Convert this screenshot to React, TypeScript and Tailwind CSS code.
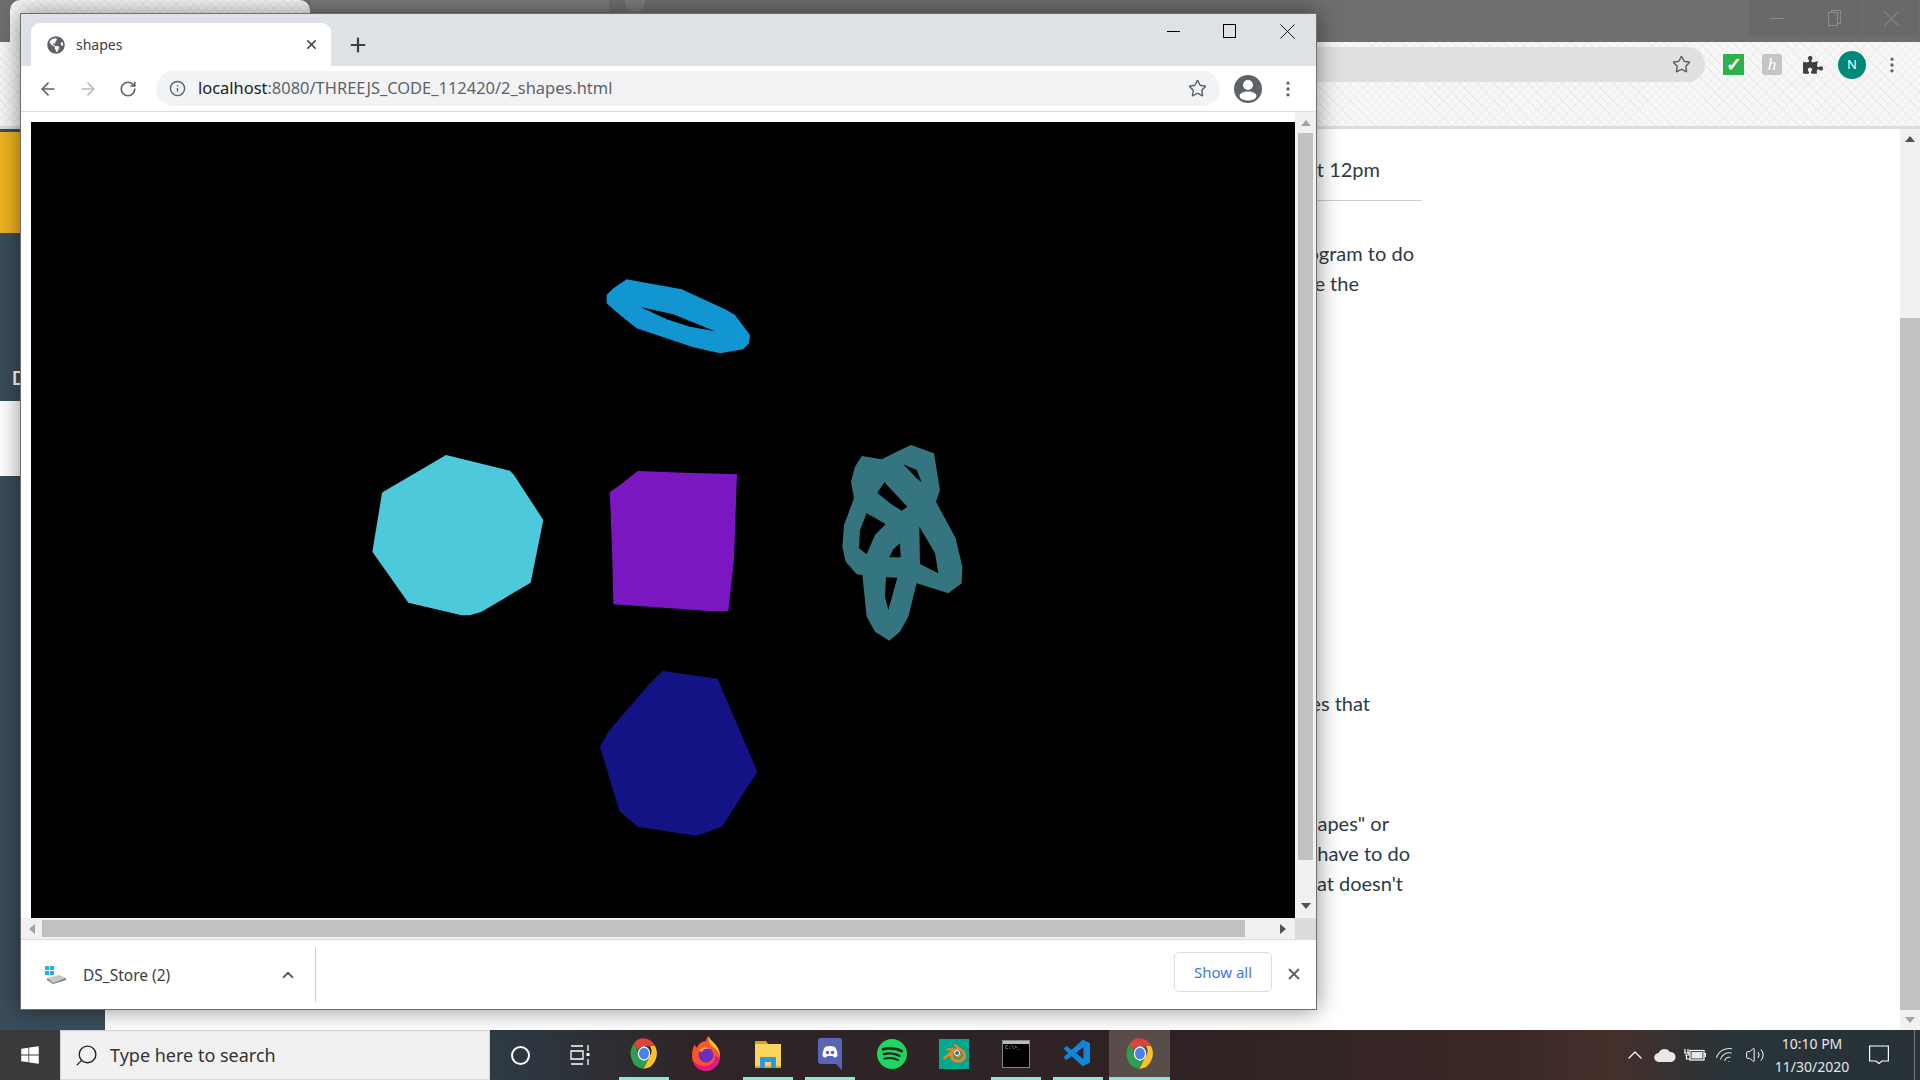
import { ArrowLeft, ArrowRight, ChevronUp, EllipsisVertical, Info, Plus, RotateCw, Search, Star, Volume2, Wifi, X } from "lucide-react";
import { FaGlobeAmericas, FaPuzzlePiece, FaWindows } from "react-icons/fa";
import { SiBlender, SiDiscord, SiSpotify } from "react-icons/si";
import { VscVscode } from "react-icons/vsc";

const pattern =
  "bg-[#f7f7f7] [background-image:repeating-linear-gradient(45deg,#ececec_0_1px,transparent_1px_6px),repeating-linear-gradient(-45deg,#efefef_0_1px,transparent_1px_6px)]";

function ChromeIcon({ size = 28 }: { size?: number }) {
  return (
    <svg width={size} height={size + 5} viewBox="0 0 48 48" preserveAspectRatio="none">
      <path d="M24 2a22 22 0 0 1 19 11H24a11 11 0 0 0-10.5 7.5L6.5 9.5A22 22 0 0 1 24 2z" fill="#db4437" />
      <path d="M43 13a22 22 0 0 1-20 33l10-17a11 11 0 0 0 1-16z" fill="#fbc02d" />
      <path d="M6.500 9.500l9 15.500a10 10 0 0 0 17 4l-9.500 17A22 22 0 0 1 6.500 9.500z" fill="#2e9e4f" />
      <circle cx="24" cy="24" r="10.500" fill="#fff" />
      <circle cx="24" cy="24" r="8.500" fill="#4f80ec" />
    </svg>
  );
}

function FirefoxIcon() {
  return (
    <svg width="30" height="36" viewBox="0 0 30 36">
      <path d="M15 35C7 35 1 28 1 20 1 15 2 11 4 8c0 2 1 3 2 4 1-4 5-7 9-7 0-2 1-4 3-5 0 3 2 4 5 7 4 4 6 8 6 13 0 8-6 15-14 15z" fill="#f9532f" />
      <path d="M15 35c-6 0-12-4-13-11 3 5 8 7 13 6 6-1 10-5 9-11 3 3 5 3 5 1 0 8-6 15-14 15z" fill="#e31587" />
      <path d="M18 0c0 3 2 4 5 7 4 4 6 8 6 13-2-6-6-9-9-10-2-3-3-7-2-10z" fill="#ffbd2e" />
      <circle cx="15" cy="19" r="7.500" fill="#6b2fc0" />
      <path d="M8 15c2-4 8-5 11-2-4-1-7 0-8 3z" fill="#ffa436" />
    </svg>
  );
}

function FolderIcon() {
  return (
    <svg width="28" height="30" viewBox="0 0 28 30">
      <path d="M1 2h11l3 4H1z" fill="#d99f16" />
      <rect x="1" y="5" width="26" height="24" fill="#f9d560" />
      <rect x="1" y="27" width="26" height="2" fill="#d9a62a" />
      <path d="M6 18h16v11h-5v-6h-6v6H6z" fill="#2b9ae8" />
    </svg>
  );
}

function DiscordIcon() {
  return (
    <svg width="24" height="32" viewBox="0 0 24 32">
      <path d="M3 0h18a3 3 0 0 1 3 3v29l-6-6H3a3 3 0 0 1-3-3V3a3 3 0 0 1 3-3z" fill="#5865b8" />
      <path d="M7 9c3-1.500 7-1.500 10 0 2 3 2.500 6 2.500 9-1 1-2.500 1.500-3.500 1.500l-1-1.500H9l-1 1.500c-1 0-2.500-.5-3.500-1.500 0-3 .5-6 2.500-9z" fill="#fff" />
      <circle cx="9.500" cy="14.500" r="1.800" fill="#5865b8" />
      <circle cx="14.500" cy="14.500" r="1.800" fill="#5865b8" />
    </svg>
  );
}

function BlenderIcon() {
  return (
    <div className="relative flex h-[30px] w-[30px] items-center justify-center bg-[#00a88f]">
      <SiBlender size={23} color="#f0851f" />
      <div className="absolute left-[15px] top-[11px] h-[6px] w-[6px] rounded-full border border-white bg-[#2a6ea6]" />
    </div>
  );
}

function TerminalIcon() {
  return (
    <div className="h-[28px] w-[28px] border border-[#888] bg-black">
      <div className="h-[3px] bg-[#bbb]" />
      <div className="pl-[2px] pt-[1px] font-['Liberation_Mono'] text-[5px] leading-[6px] text-[#ccc]">C:\&gt;_</div>
    </div>
  );
}

const taskItems = [
  { icon: <ChromeIcon />, on: true },
  { icon: <FirefoxIcon />, on: false },
  { icon: <FolderIcon />, on: true },
  { icon: <DiscordIcon />, on: true },
  { icon: <SiSpotify size={30} color="#1ed760" />, on: false },
  { icon: <BlenderIcon />, on: false },
  { icon: <TerminalIcon />, on: true },
  { icon: <VscVscode size={32} color="#0f87d6" />, on: true },
];

function Taskbar() {
  return (
    <div className="flex h-[50px] shrink-0 bg-[linear-gradient(90deg,#3c3a3a_0%,#2c3a44_26%,#2f2527_36%,#2e2224_60%,#3a2826_78%,#452f2b_84%,#283438_90%,#273239_100%)] text-white">
      <div className="flex w-[60px] items-center justify-center">
        <FaWindows size={20} color="#fff" />
      </div>
      <div className="flex w-[430px] items-center gap-[11px] border border-[#d5d5d5] bg-[#f1f1f1] pl-[13px]">
        <Search size={25} strokeWidth={1.300} color="#222" className="-scale-x-100" />
        <span className="font-['Noto_Sans'] text-[18px] text-[#333]">Type here to search</span>
      </div>
      <div className="flex w-[60px] items-center justify-center">
        <div className="h-[19px] w-[19px] rounded-full border-[2.500px] border-white" />
      </div>
      <div className="flex w-[60px] items-center justify-center">
        <svg width="22" height="22" viewBox="0 0 22 22" fill="none" stroke="#fff" strokeWidth="1.300">
          <path d="M2 2h12M2 7h12v8H2zM2 20h12M19 1v6M19 15v6" />
          <rect x="17.500" y="9" width="3" height="3" fill="#fff" stroke="none" />
        </svg>
      </div>
      <div className="flex pl-[3px]">
        {taskItems.map((t, i) => (
          <div key={i} className="flex h-[50px] w-[62px] flex-col">
            <div className="flex flex-1 items-center justify-center">{t.icon}</div>
            <div className={`mx-[6px] h-[3px] ${t.on ? "bg-[#8be8d8]" : ""}`} />
          </div>
        ))}
        <div className="flex h-[50px] w-[61px] flex-col bg-[#594d4b]">
          <div className="flex flex-1 items-center justify-center">
            <ChromeIcon />
          </div>
          <div className="h-[3px] bg-[#8be8d8]" />
        </div>
      </div>
      <div className="ml-auto flex w-[300px]">
        <div className="flex w-[30px] items-center justify-center">
          <ChevronUp size={24} strokeWidth={1.200} color="#fff" />
        </div>
        <div className="flex w-[30px] items-center justify-center">
          <svg width="22" height="14" viewBox="0 0 22 14">
            <path d="M5 14a4.500 4.500 0 0 1-.5-9A6.500 6.500 0 0 1 16 4a5 5 0 0 1 1 10z" fill="#e8e8e8" />
          </svg>
        </div>
        <div className="flex w-[30px] items-center justify-center">
          <svg width="22" height="14" viewBox="0 0 22 14" fill="none" stroke="#fff" strokeWidth="1.200">
            <path d="M1 1v4M4 1v4M0 5h5v2H1M2.500 7v4h4" />
            <rect x="6" y="2.500" width="14" height="9.500" />
            <rect x="7.500" y="4" width="11" height="6.500" fill="#e8e8e8" stroke="none" />
            <rect x="20.500" y="5" width="1.500" height="4" fill="#fff" stroke="none" />
          </svg>
        </div>
        <div className="flex w-[30px] items-center justify-center">
          <Wifi size={21} strokeWidth={1.200} color="#ddd" className="-rotate-[30deg]" />
        </div>
        <div className="flex w-[30px] items-center justify-center">
          <Volume2 size={20} strokeWidth={1.200} color="#fff" />
        </div>
        <div className="flex w-[84px] flex-col items-center justify-center font-['Noto_Sans'] text-[14px] leading-[23px] text-[#e6e6e6]">
          <span>10:10 PM</span>
          <span>11/30/2020</span>
        </div>
        <div className="flex w-[50px] items-center justify-center">
          <svg width="20" height="20" viewBox="0 0 20 20" fill="none" stroke="#fff" strokeWidth="1.200">
            <path d="M.6 1h18.800v15H13l-3 2.500L7 16H.6z" />
          </svg>
        </div>
        <div className="my-0 ml-[10px] w-px bg-[#777]" />
      </div>
    </div>
  );
}

function PageLine({ w, text, cls = "" }: { w: string; text: string; cls?: string }) {
  return <div className={`${w} whitespace-nowrap text-right ${cls}`}>{text}</div>;
}

function BackgroundBrowser() {
  return (
    <div className="flex min-h-0 flex-1 flex-col">
      <div className="flex h-[42px] shrink-0 bg-[#6e6e6e]">
        <div className={`ml-[10px] w-[300px] rounded-t-[10px] ${pattern}`} />
        <div className="h-[12px] w-[299px] bg-[#7b7b7b]" />
        <div className="ml-[16px] h-[12px] w-[20px] rounded-b-full bg-[#7b7b7b]" />
        <div className="ml-auto mr-px flex h-[36px]">
          <div className="flex w-[56px] items-center justify-center bg-[#696969]">
            <div className="h-px w-[14px] bg-[#8c8c8c]" />
          </div>
          <div className="ml-px flex w-[56px] items-center justify-center bg-[#696969]">
            <div className="relative h-[16px] w-[13px]">
              <div className="absolute right-0 top-0 h-[14px] w-[10px] border border-[#8c8c8c]" />
              <div className="absolute bottom-0 left-0 h-[14px] w-[10px] border border-[#8c8c8c] bg-[#696969]" />
            </div>
          </div>
          <div className="ml-px flex w-[56px] items-center justify-center bg-[#696969]">
            <X size={27} strokeWidth={0.900} color="#8c8c8c" />
          </div>
        </div>
      </div>
      <div className={`flex h-[87px] shrink-0 items-start border-b-[3px] border-[#dcdce0] pt-[5px] ${pattern}`}>
        <div className="ml-[1000px] flex h-[35px] w-[705px] items-center justify-end rounded-r-full bg-[#e0e0e0] pr-[14px]">
          <Star size={19} strokeWidth={1.800} color="#5f6368" />
        </div>
        <div className="flex h-[35px] items-center">
          <div className="ml-[18px] flex h-[21px] w-[21px] items-center justify-center border border-[#2eb04a] bg-[#2eb04a] text-[19px] font-bold leading-none text-white">✓</div>
          <div className="ml-[18px] flex h-[21px] w-[20px] items-center justify-center rounded-[3px] bg-[#c4c4c4] font-['Liberation_Serif'] text-[17px] italic leading-none text-white">h</div>
          <div className="ml-[21px]">
            <FaPuzzlePiece size={20} color="#3c4043" />
          </div>
          <div className="ml-[15px] flex h-[28px] w-[28px] items-center justify-center rounded-full bg-[#00897b] font-['Noto_Sans'] text-[13px] text-white">N</div>
          <EllipsisVertical size={20} color="#5f6368" className="ml-[16px]" />
        </div>
      </div>
      <div className="flex min-h-0 flex-1">
        <div className="flex w-[105px] shrink-0 flex-col bg-[#3a4c5a] pt-[3px]">
          <div className="h-[101px] bg-[#eeb21f]" />
          <div className="mt-[135px] h-[20px] pl-[12px] font-['Lato'] text-[18px] font-bold leading-[20px] text-white">D</div>
          <div className="mt-[13px] h-[75px] bg-white" />
        </div>
        <div className="min-w-0 flex-1 bg-white pt-[25px] font-['Lato'] text-[20px] leading-[30px] text-[#2d3b45]">
          <PageLine w="w-[1275px]" text="at 12pm" />
          <div className="mt-[16px] h-px w-[1317px] bg-[#c7cdd1]" />
          <PageLine w="w-[1309px]" cls="mt-[37px]" text="program to do" />
          <PageLine w="w-[1254px]" text="use the" />
          <PageLine w="w-[1265px]" cls="mt-[390px]" text="shapes that" />
          <PageLine w="w-[1284px]" cls="mt-[90px]" text={'"shapes" or'} />
          <PageLine w="w-[1305px]" text="have to do" />
          <PageLine w="w-[1298px]" text="that doesn't" />
        </div>
        <div className="flex w-[20px] shrink-0 flex-col bg-[#f1f1f1]">
          <div className="flex h-[20px] items-center justify-center">
            <div className="h-0 w-0 border-x-[5px] border-b-[6px] border-x-transparent border-b-[#505050]" />
          </div>
          <div className="mt-[169px] min-h-0 flex-1 bg-[#c1c1c1]" />
          <div className="flex h-[20px] items-center justify-center">
            <div className="h-0 w-0 border-x-[5px] border-t-[6px] border-x-transparent border-t-[#a3a3a3]" />
          </div>
        </div>
      </div>
    </div>
  );
}

function Scene() {
  return (
    <svg viewBox="31 122 1264 796" className="h-[796px] w-[1264px] bg-black">
      <g transform="translate(340 430) scale(0.33333)">
        <polygon fill="#4dc9db" points="318,75 510,122 522,135 610,270 572,458 425,545 390,556 365,556 205,518 97,365 126,190 130,185" />
        <polygon fill="#7a17c0" points="893,123 1035,128 1192,133 1190,155 1186,270 1182,390 1172,480 1165,543 1105,543 930,530 820,523 816,350 812,250 809,187 840,165" />
        <polygon fill="#131385" points="967,723 1133,746 1252,1025 1146,1190 1070,1218 893,1190 838,1143 780,950 805,905 920,770" />
      </g>
      <g transform="translate(800 420) scale(0.33333)">
        <path
          fill="#347580"
          fillRule="evenodd"
          d="M333 75L402 100L420 210L408 245L467 355L487 440L485 490L445 520L350 490L325 590L300 635L268 662L225 635L200 590L187 465L170 463L137 425L127 380L132 315L162 235L153 185L165 140L185 108L245 118L290 95Z
          M310 133L350 150L365 187L350 175Z
          M253 187L322 260L305 272L270 250L232 218Z
          M200 280L257 312L225 345L200 403L177 385L180 330Z
          M300 370L302 412L268 412L280 388Z
          M358 320L385 365L405 400L415 460L360 432Z
          M258 472L292 473L265 570L255 530Z"
        />
      </g>
      <g transform="translate(580 260) scale(0.33333)">
        <path
          fill="#1196d1"
          fillRule="evenodd"
          d="M140 58L180 65L305 88L440 150L465 165L510 225L507 250L490 268L420 280L340 262L170 205L120 165L80 130L80 105L100 85Z
          M183 142L280 163L405 214L330 200L260 178Z"
        />
      </g>
    </svg>
  );
}

function BrowserWindow() {
  return (
    <div className="absolute left-[20px] top-[13px] flex h-[997px] w-[1297px] flex-col border border-[#6f6f6f] bg-white shadow-[0_0_22px_rgba(0,0,0,0.45)]">
      <div className="flex h-[52px] shrink-0 bg-[#dee1e6] pl-[10px] pt-[9px]">
        <div className="flex h-[43px] w-[300px] items-center rounded-t-[9px] bg-white pl-[16px] pr-[12px]">
          <FaGlobeAmericas size={18} color="#5f6368" />
          <span className="ml-[11px] flex-1 font-['Noto_Sans'] text-[14px] text-[#3c4043]">shapes</span>
          <X size={15} strokeWidth={2.500} color="#3c4043" />
        </div>
        <Plus size={22} strokeWidth={2.400} color="#3c4043" className="ml-[16px] mt-[11px]" />
        <div className="ml-auto -mt-[10px] flex h-[36px] items-center">
          <div className="flex w-[56px] items-center justify-center">
            <div className="h-px w-[13px] bg-black" />
          </div>
          <div className="flex w-[57px] items-center justify-center">
            <div className="h-[14px] w-[13px] border border-black" />
          </div>
          <div className="flex w-[58px] items-center justify-center">
            <X size={27} strokeWidth={0.800} color="#000" />
          </div>
        </div>
      </div>
      <div className="flex h-[46px] shrink-0 items-center border-b border-[#dadce0] bg-white">
        <ArrowLeft size={20} strokeWidth={2} color="#5f6368" className="ml-[17px]" />
        <ArrowRight size={20} strokeWidth={2} color="#b9bbbe" className="ml-[20px]" />
        <RotateCw size={18} strokeWidth={2.200} color="#5f6368" className="ml-[21px]" />
        <div className="ml-[19px] flex h-[35px] w-[1064px] items-center rounded-full bg-[#f1f3f4] pl-[13px] pr-[13px]">
          <Info size={17} strokeWidth={2} color="#5f6368" />
          <span className="ml-[12px] flex-1 whitespace-nowrap font-['Noto_Sans'] text-[16.450px] text-[#5f6368]">
            <span className="text-[#202124]">localhost</span>:8080/THREEJS_CODE_112420/2_shapes.html
          </span>
          <Star size={19} strokeWidth={1.800} color="#5f6368" />
        </div>
        <div className="ml-[14px] flex h-[28px] w-[28px] items-center justify-center overflow-hidden rounded-full bg-[#5f6368]">
          <svg width="28" height="28" viewBox="0 0 28 28">
            <circle cx="14" cy="10" r="5" fill="#fff" />
            <ellipse cx="14" cy="21" rx="8.500" ry="4.500" fill="#fff" />
          </svg>
        </div>
        <EllipsisVertical size={20} color="#5f6368" className="ml-[16px]" />
      </div>
      <div className="flex min-h-0 flex-1 flex-col">
        <div className="flex min-h-0 flex-1">
          <div className="flex-1 pl-[10px] pt-[10px]">
            <Scene />
          </div>
          <div className="flex w-[21px] shrink-0 flex-col bg-[#f1f1f1]">
            <div className="flex h-[21px] items-center justify-center">
              <div className="h-0 w-0 border-x-[5px] border-b-[6px] border-x-transparent border-b-[#a3a3a3]" />
            </div>
            <div className="mx-[3px] h-[727px] bg-[#c1c1c1]" />
            <div className="mt-auto flex h-[21px] items-center justify-center pb-[3px]">
              <div className="h-0 w-0 border-x-[5px] border-t-[6px] border-x-transparent border-t-[#505050]" />
            </div>
          </div>
        </div>
        <div className="flex h-[21px] shrink-0 items-center bg-[#f1f1f1]">
          <div className="flex w-[21px] items-center justify-center">
            <div className="h-0 w-0 border-y-[5px] border-r-[6px] border-y-transparent border-r-[#a3a3a3]" />
          </div>
          <div className="h-[17px] w-[1203px] bg-[#c1c1c1]" />
          <div className="flex-1">
            <div className="ml-[35px] h-0 w-0 border-y-[5px] border-l-[6px] border-y-transparent border-l-[#505050]" />
          </div>
          <div className="h-full w-[21px] bg-[#dcdcdc]" />
        </div>
      </div>
      <div className="flex h-[70px] shrink-0 items-center border-t border-[#dadce0] bg-white">
        <svg width="22" height="18" viewBox="0 0 22 18" className="ml-[24px]">
          <rect x="0" y="0" width="4" height="4" fill="#1fb0ea" />
          <rect x="5" y="0" width="4" height="4" fill="#1fb0ea" />
          <rect x="0" y="5" width="4" height="4" fill="#1fb0ea" />
          <rect x="5" y="5" width="4" height="4" fill="#1fb0ea" />
          <path d="M2 12l12-3 7 3-13 5z" fill="#c4c8c8" />
          <path d="M2 12l6 5 13-5v2L8 18l-6-4z" fill="#777" />
        </svg>
        <span className="ml-[16px] mt-[2px] w-[196px] font-['Noto_Sans'] text-[15.500px] text-[#3c4043]">DS_Store (2)</span>
        <ChevronUp size={18} strokeWidth={2.500} color="#5f6368" />
        <div className="ml-[18px] h-[55px] w-px bg-[#ccc]" />
        <div className="ml-auto -mt-[5px] flex h-[40px] w-[98px] items-center justify-center rounded-[5px] border border-[#dadce0] font-['Noto_Sans'] text-[15px] text-[#3b78e7]">
          Show all
        </div>
        <X size={18} strokeWidth={2.500} color="#5f6368" className="ml-[13px] mr-[13px] -mt-[2px]" />
      </div>
    </div>
  );
}

export default function App() {
  return (
    <div className="relative flex h-[1080px] w-[1920px] flex-col overflow-hidden">
      <BackgroundBrowser />
      <Taskbar />
      <BrowserWindow />
    </div>
  );
}
